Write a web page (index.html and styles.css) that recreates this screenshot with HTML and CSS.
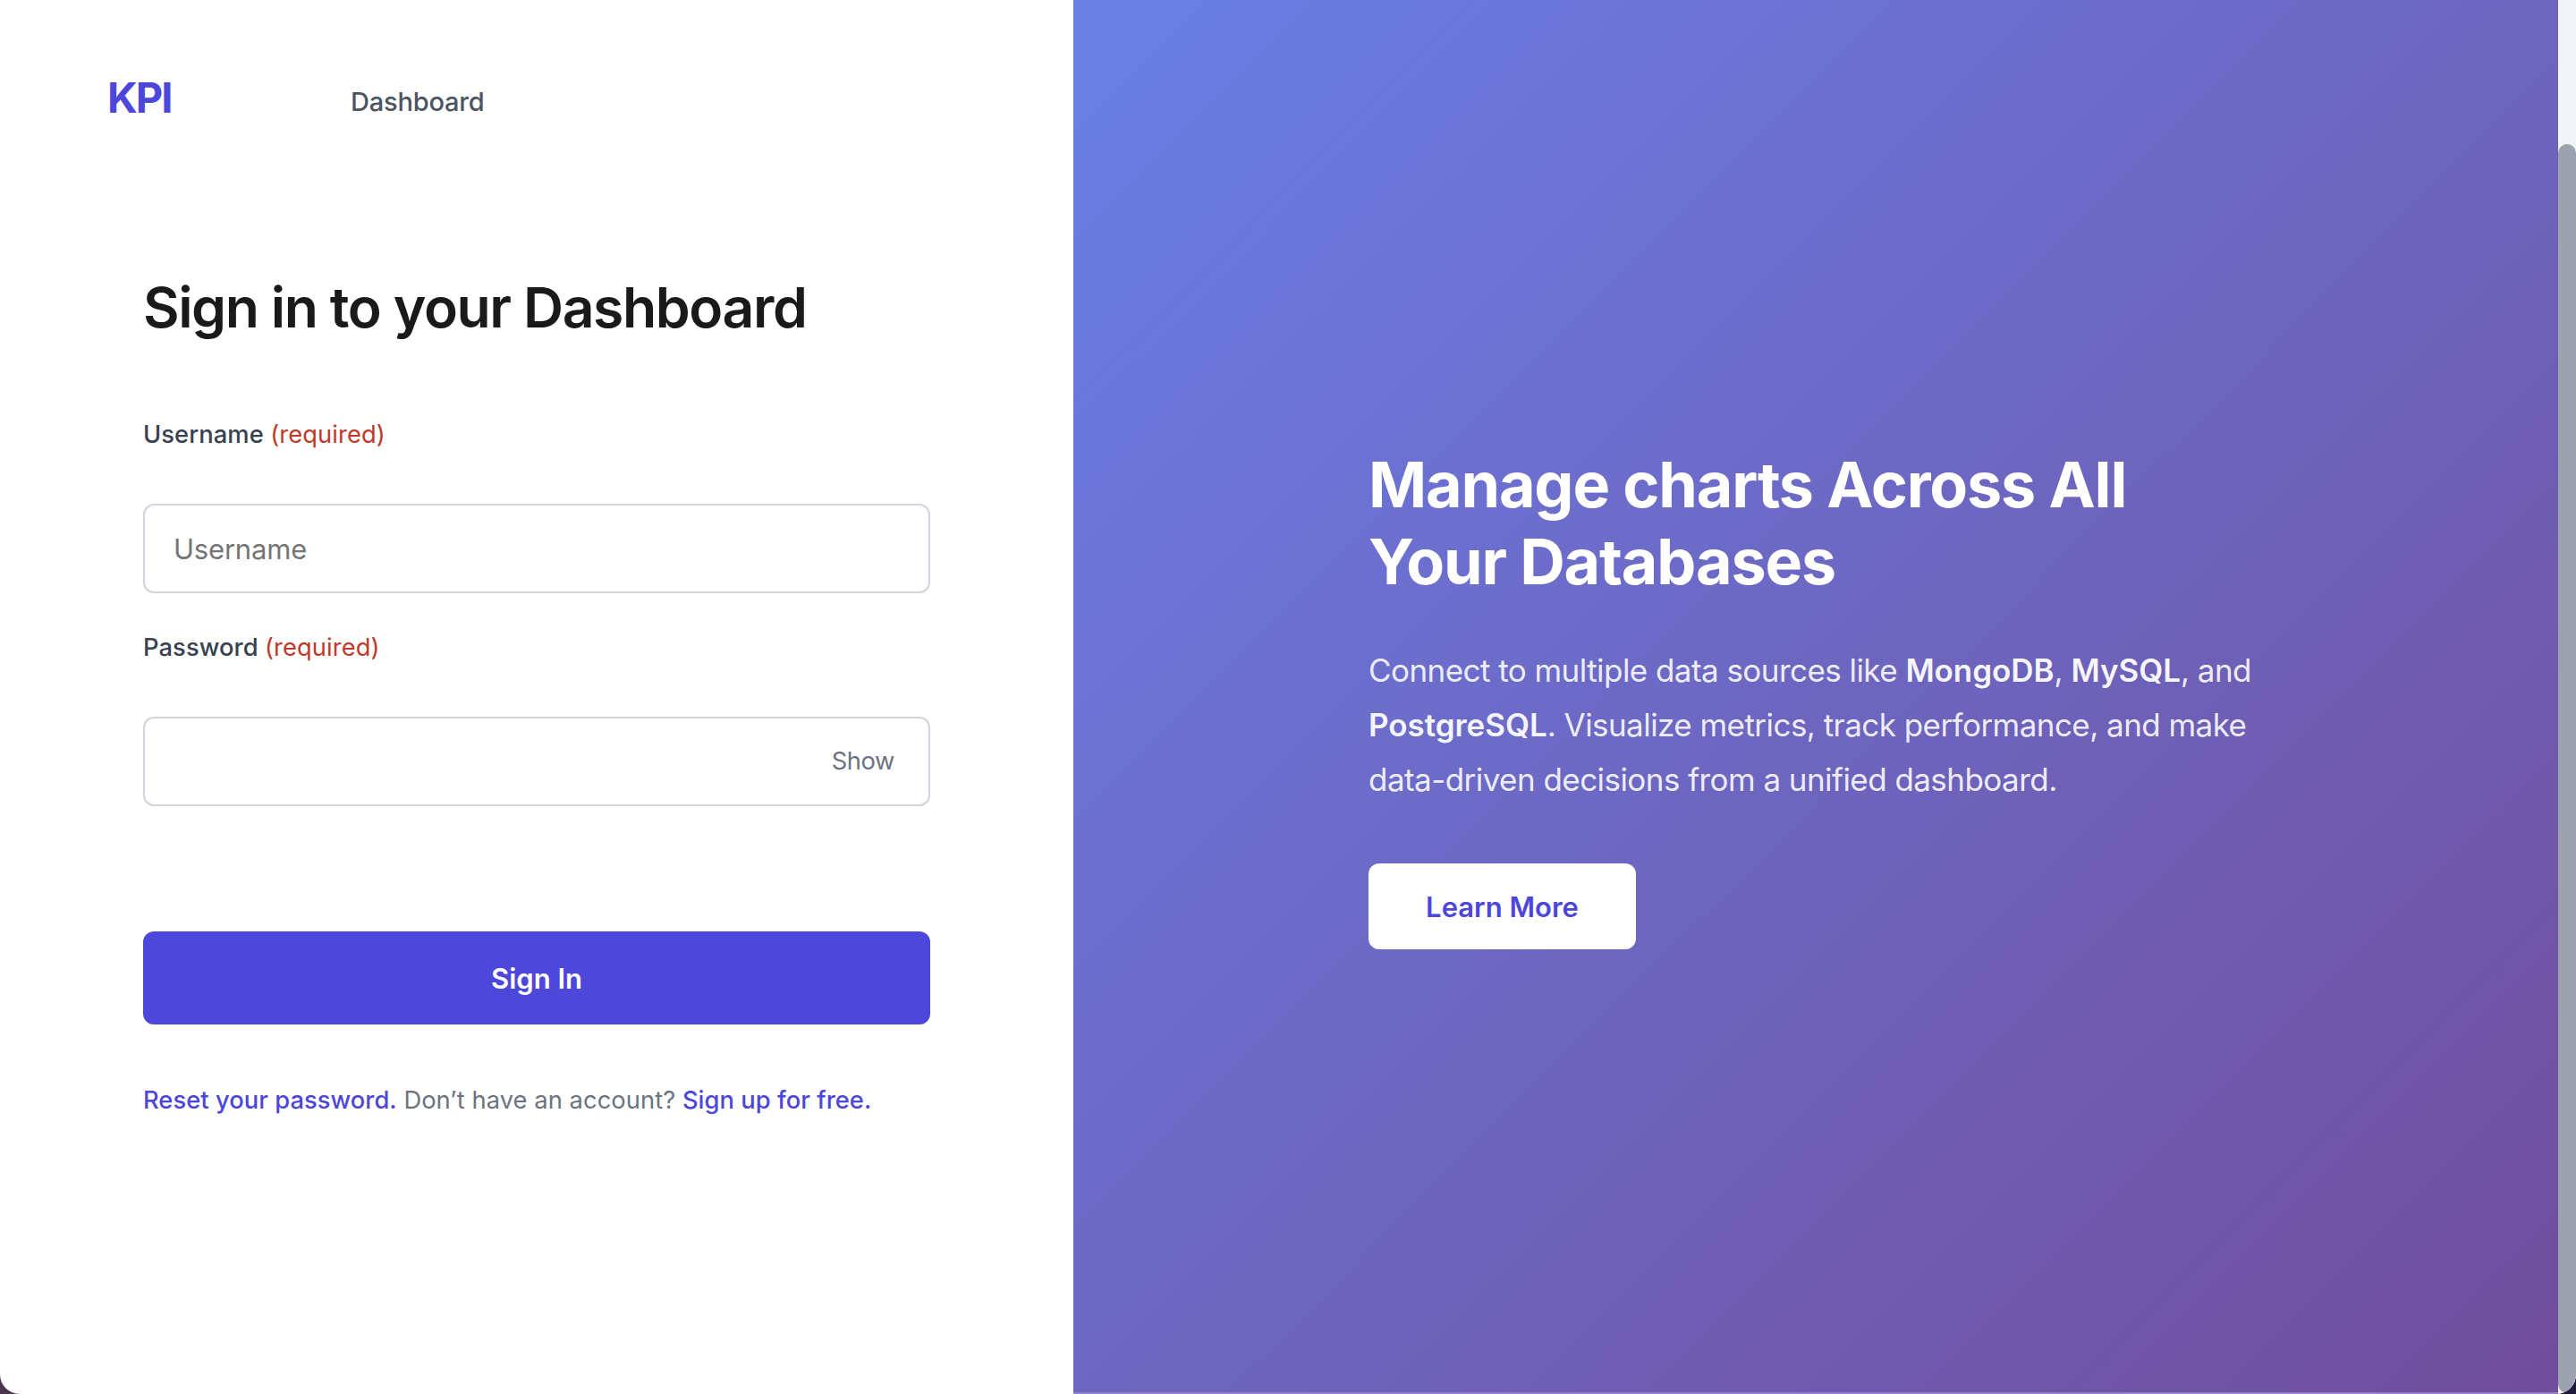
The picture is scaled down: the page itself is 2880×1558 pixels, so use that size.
FILE: index.html
```html
<!DOCTYPE html>
<html lang="en">
<head>
  <meta charset="UTF-8">
  <title>KPI - Sign in</title>
  <link rel="stylesheet" href="styles.css">
</head>
<body>

<div class="window">

  <!-- Sign in side -->
  <main class="signin">
    <header>
      <a href="#" class="logo">KPI</a>
      <nav><a href="#">Dashboard</a></nav>
    </header>

    <form class="signin-form">
      <h1>Sign in to your Dashboard</h1>

      <label for="username">Username <span class="required">(required)</span></label>
      <input type="text" id="username" placeholder="Username">

      <label for="password">Password <span class="required">(required)</span></label>
      <div class="password-box">
        <input type="password" id="password">
        <button type="button" class="toggle">Show</button>
      </div>

      <button type="submit" class="submit">Sign In</button>

      <p class="links"><a href="#">Reset your password.</a> Don’t have an account? <a href="#">Sign up for free.</a></p>
    </form>
  </main>

  <!-- Promo side -->
  <section class="promo">
    <h2>Manage charts Across All<br>Your Databases</h2>
    <p>
      Connect to multiple data sources like <strong>MongoDB</strong>, <strong>MySQL</strong>, and<br>
      <strong>PostgreSQL</strong>. Visualize metrics, track performance, and make<br>
      data-driven decisions from a unified dashboard.
    </p>
    <a href="#" class="learn-more">Learn More</a>
  </section>

  <div class="scrollbar"><div class="thumb"></div></div>
</div>

<script>
  // Show / hide password
  document.querySelector('.toggle').addEventListener('click', function () {
    const input = document.getElementById('password');
    const hidden = input.type === 'password';
    input.type = hidden ? 'text' : 'password';
    this.textContent = hidden ? 'Hide' : 'Show';
  });
</script>

</body>
</html>
```
FILE: styles.css
```css
* { box-sizing: border-box; margin: 0; padding: 0; }
body { font-family: Inter, sans-serif; background: linear-gradient(to right, #4b3550, #1e1b3a); color: #1a1a1a; height: 1558px; overflow: hidden; }
a { text-decoration: none; color: #4d46db; }
button, input { font-family: inherit; }

.window { display: flex; height: 1558px; background: #fff; border-radius: 0 0 22px 22px; overflow: hidden; }

/* Sign in side */
.signin { width: 1200px; padding-top: 80px; }
header { display: flex; align-items: center; height: 64px; padding-left: 120px; }
.logo { width: 272px; margin-bottom: 6px; font-size: 47px; line-height: 56px; font-weight: 700; letter-spacing: -2px; }
nav { padding-top: 3px; }
nav a { font-size: 29px; line-height: 44px; font-weight: 500; letter-spacing: -0.2px; color: #4b5563; }

.signin-form { padding: 162px 160px 0; }
h1 { margin-bottom: 84px; font-size: 62.4px; line-height: 76px; font-weight: 600; letter-spacing: -1.4px; white-space: nowrap; }
label { display: block; margin-bottom: 57px; font-size: 27.3px; line-height: 40px; font-weight: 500; letter-spacing: 0.1px; color: #374151; }
.required { color: #c0392b; font-weight: 400; }
input {
  display: block; width: 100%; height: 100px; margin-bottom: 41px; padding: 0 32px;
  border: 2px solid #d1d5db; border-radius: 12px; background: #fff; font-size: 31px; letter-spacing: -0.2px;
}
input::placeholder { color: #757575; }

.password-box { position: relative; margin-bottom: 140px; }
.password-box input { margin-bottom: 0; padding-right: 130px; }
.toggle {
  position: absolute; right: 40px; top: 30px;
  border: none; background: none; font-size: 27.3px; line-height: 40px; letter-spacing: -0.4px; color: #6b7280;
}
.submit {
  display: block; width: 100%; height: 104px; border: none; border-radius: 12px;
  background: #4d47db; color: #fff; font-size: 31px; font-weight: 600;
}
.links { margin-top: 65px; font-size: 27.3px; line-height: 40px; letter-spacing: 0.06px; color: #6b7280; white-space: nowrap; }
.links a { font-weight: 500; }

/* Promo side */
.promo {
  width: 1660px; height: 1556px; padding: 499px 330px 0;
  background: linear-gradient(135deg, #697fe6 0%, #714d9c 100%); color: #fff; white-space: nowrap;
  box-shadow: 0 2px 0 #9080c6;
}
.promo h2 { margin-bottom: 48px; font-size: 70px; line-height: 86px; font-weight: 700; letter-spacing: -1.18px; }
.promo p { margin-bottom: 63px; font-size: 35px; line-height: 61px; letter-spacing: -0.55px; color: rgba(255, 255, 255, 0.9); }
.promo strong { font-weight: 600; letter-spacing: -0.05px; color: rgba(255, 255, 255, 0.95); }
.learn-more {
  display: flex; align-items: center; justify-content: center; width: 299px; height: 96px;
  border-radius: 12px; background: #fff; font-size: 31px; font-weight: 600;
}

.scrollbar { width: 20px; padding-top: 161px; background: #f3f4f6; }
.thumb { height: 1396px; border-radius: 10px; background: #9ca3af; }
```
